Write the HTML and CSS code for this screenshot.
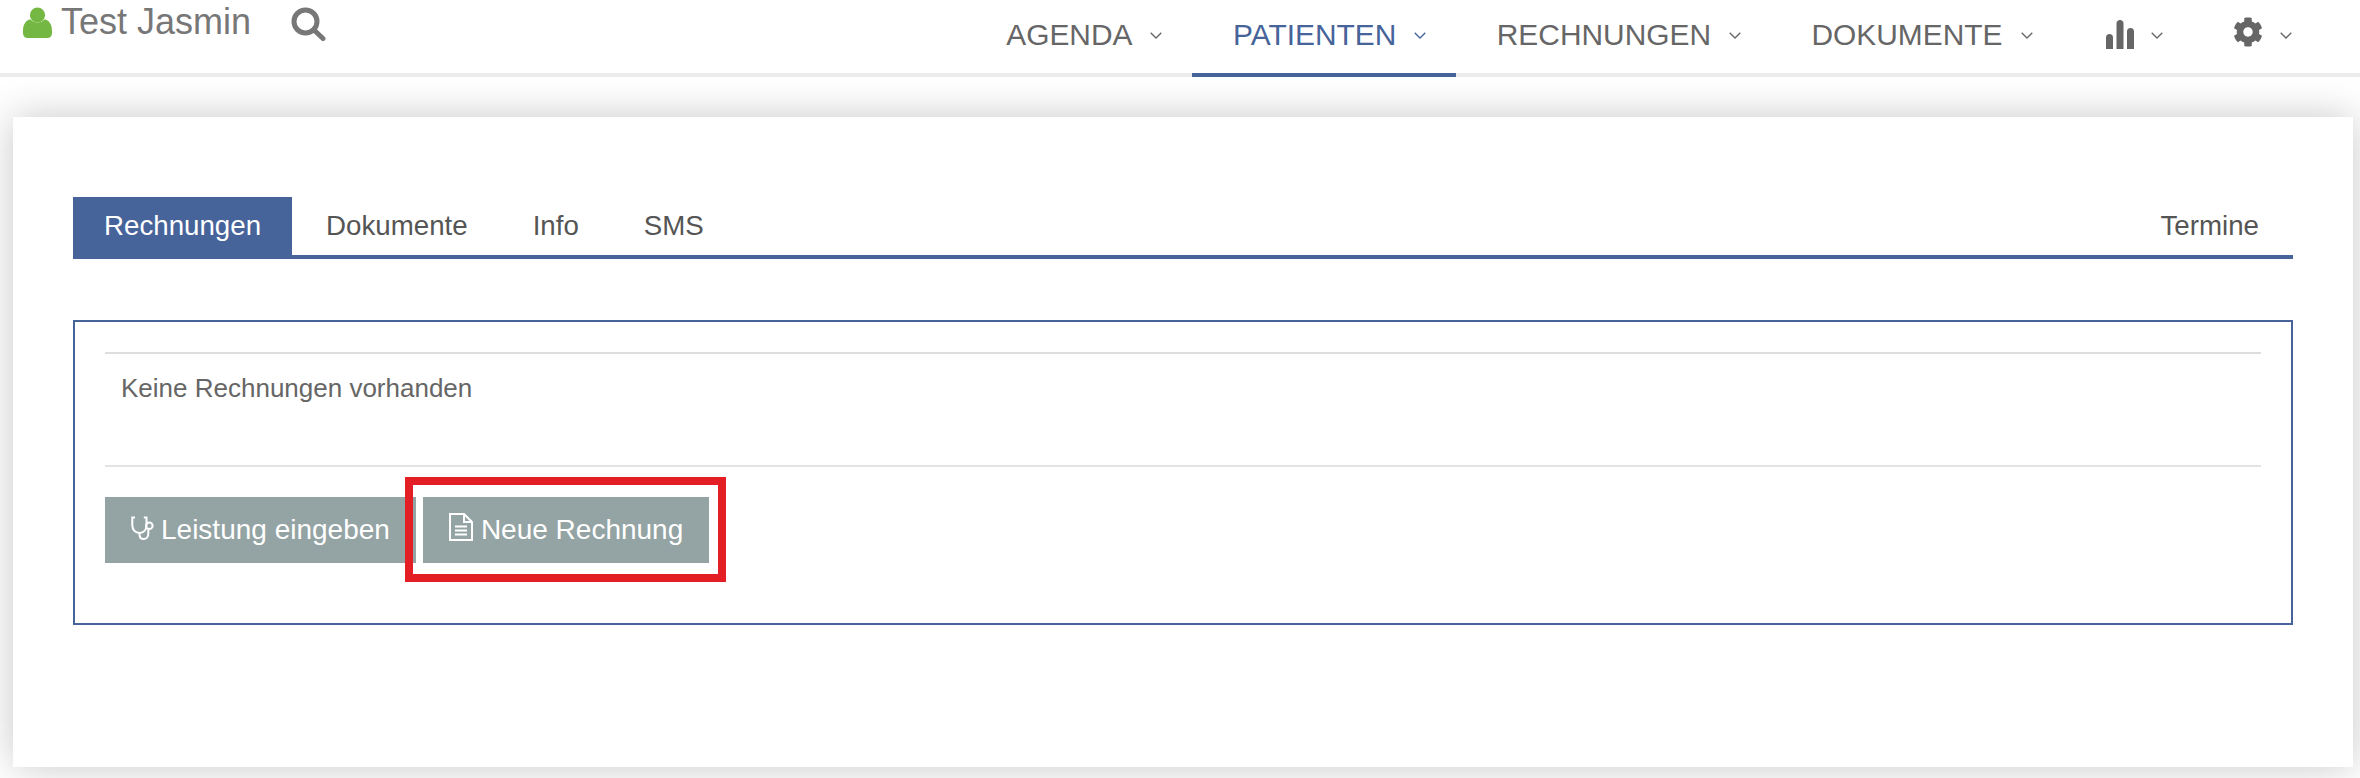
FILE: index.html
```html
<!DOCTYPE html>
<html lang="de">
<head>
<meta charset="utf-8">
<title>Patienten</title>
<link rel="stylesheet" href="styles.css">
</head>
<body>
<header class="topbar">
  <div class="user">
    <svg class="user-icon" viewBox="0 0 29 31"><circle cx="14.5" cy="8" r="7.6"/><path d="M0 23.5C0 17.5 3 13 7.5 12.2 9.300 14.300 11.700 15.500 14.500 15.500S19.700 14.300 21.500 12.200C26 13 29 17.500 29 23.500V26.500C29 29 27 31 24.500 31H4.500C2 31 0 29 0 26.500Z"/></svg>
    <span class="user-name">Test Jasmin</span>
    <svg class="search-icon" viewBox="0 0 35 34"><circle cx="14.500" cy="14.500" r="11.500"/><path d="M23 23L32 31.500"/></svg>
  </div>
  <nav class="nav">
    <a class="nav-item"><span>AGENDA</span><svg class="chev" viewBox="0 0 12 7"><path d="M.7.7 6 6 11.300.7"/></svg></a>
    <a class="nav-item active"><span>PATIENTEN</span><svg class="chev" viewBox="0 0 12 7"><path d="M.7.7 6 6 11.300.7"/></svg></a>
    <a class="nav-item"><span>RECHNUNGEN</span><svg class="chev" viewBox="0 0 12 7"><path d="M.7.7 6 6 11.300.7"/></svg></a>
    <a class="nav-item"><span>DOKUMENTE</span><svg class="chev" viewBox="0 0 12 7"><path d="M.7.7 6 6 11.300.7"/></svg></a>
    <a class="nav-item icon-item"><svg class="chart-icon" viewBox="0 0 28 29"><path d="M0 29V17.500C0 15.500 1.300 14 3.500 14S7 15.500 7 17.500V29ZM10.500 29V3.500C10.500 1.500 12 0 14 0S17.500 1.500 17.500 3.500V29ZM21 29V11.500C21 9.500 22.300 8 24.500 8S28 9.500 28 11.500V29Z"/></svg><svg class="chev" viewBox="0 0 12 7"><path d="M.7.7 6 6 11.300.7"/></svg></a>
    <a class="nav-item icon-item"><svg class="gear-icon" viewBox="0 0 512 512"><path d="M487.400 315.700l-42.600-24.600c4.300-23.200 4.300-47 0-70.200l42.600-24.600c4.900-2.800 7.100-8.600 5.500-14-11.100-35.600-30-67.800-54.700-94.600-3.800-4.100-10-5.100-14.800-2.300L380.800 110c-17.900-15.400-38.500-27.300-60.800-35.100V25.800c0-5.600-3.900-10.500-9.400-11.700-36.700-8.200-74.300-7.800-109.200 0-5.500 1.200-9.400 6.100-9.400 11.700V75c-22.200 7.900-42.800 19.800-60.800 35.100L88.700 85.500c-4.900-2.800-11-1.900-14.800 2.300-24.700 26.700-43.600 58.900-54.700 94.600-1.700 5.400.6 11.200 5.500 14L67.300 221c-4.300 23.200-4.300 47 0 70.200l-42.600 24.600c-4.900 2.800-7.100 8.600-5.500 14 11.100 35.600 30 67.800 54.700 94.600 3.800 4.100 10 5.100 14.800 2.300l42.600-24.600c17.900 15.400 38.500 27.300 60.800 35.100v49.200c0 5.600 3.900 10.500 9.400 11.700 36.700 8.200 74.300 7.800 109.200 0 5.500-1.200 9.400-6.100 9.400-11.700v-49.200c22.200-7.900 42.800-19.800 60.800-35.100l42.600 24.600c4.900 2.800 11 1.900 14.800-2.300 24.700-26.700 43.600-58.900 54.700-94.600 1.500-5.500-.7-11.300-5.600-14.100zM256 336c-44.100 0-80-35.900-80-80s35.900-80 80-80 80 35.900 80 80-35.900 80-80 80z"/></svg><svg class="chev" viewBox="0 0 12 7"><path d="M.7.7 6 6 11.300.7"/></svg></a>
  </nav>
</header>
<main class="card">
  <div class="tabs">
    <a class="tab active">Rechnungen</a>
    <a class="tab">Dokumente</a>
    <a class="tab">Info</a>
    <a class="tab">SMS</a>
    <a class="tab tab-right">Termine</a>
  </div>
  <section class="panel">
    <div class="message">Keine Rechnungen vorhanden</div>
    <div class="actions">
      <a class="btn btn-first"><svg class="steth-icon" viewBox="0 0 24 24"><path d="M5 1.500H2.300V9C2.300 14 5.500 17 9.500 17S16.500 14 16.500 9V1.500H13.800"/><path d="M9.500 17V18.500C9.500 21.500 11.500 23 13.800 23S18.300 21 18.300 18V13.500"/><circle cx="19.300" cy="9.800" r="3.300"/></svg>Leistung eingeben</a>
      <a class="btn btn-marked"><svg class="doc-icon" viewBox="0 0 24 28"><path d="M1 1H15L23 9V27H1Z"/><path d="M15 1V9H23"/><path class="doc-lines" d="M6 13.500H18M6 17.500H18M6 21.500H18"/></svg>Neue Rechnung<span class="marker"></span></a>
    </div>
  </section>
</main>
</body>
</html>
```
FILE: styles.css
```css
* { box-sizing: border-box; }
html, body { margin: 0; height: 778px; overflow: hidden; background: #fff; }
body { font-family: "Liberation Sans", Arial, sans-serif; color: #666; }

.topbar {
  position: relative;
  display: flex;
  justify-content: space-between;
  height: 77px;
  border-bottom: 4px solid #ececec;
  background: #fff;
}
.user { display: flex; align-items: flex-start; padding-left: 23px; }
.user-icon { width: 29px; height: 31px; margin-top: 7px; fill: #74b843; }
.user-name { margin-left: 9px; font-size: 36px; line-height: 44px; color: #777; }
.search-icon { width: 35px; height: 34px; margin: 7px 0 0 40px; fill: none; stroke: #777; stroke-width: 5; stroke-linecap: round; }

.nav { display: flex; margin-right: 38px; }
.nav-item {
  display: flex;
  align-items: center;
  gap: 18px;
  height: 77px;
  padding: 0 30px 4px 40.5px;
  border-bottom: 4px solid transparent;
  font-size: 29.9px;
  color: #666;
}
.nav-item.active { border-bottom-color: #46639a; color: #46639a; }
.nav-item .chev { width: 12px; height: 7px; margin-top: 2px; fill: none; stroke: currentColor; stroke-width: 1.300; }
.icon-item { gap: 17px; padding-left: 43px; }
.icon-item:last-child { padding-left: 40.5px; }
.chart-icon { width: 28px; height: 29px; fill: #666; }
.gear-icon { width: 30px; height: 30px; fill: #666; margin-top: -5px; }

.card {
  height: 650px;
  margin: 40px 7px 11px 13px;
  padding: 80px 60px 0;
  background: #fff;
  box-shadow: 0 0 38px rgba(0, 0, 0, .22);
}
.tabs { display: flex; height: 62px; border-bottom: 4px solid #46639a; }
.tab {
  padding: 0 31px;
  margin-right: 3px;
  font-size: 27.7px;
  line-height: 58px;
  color: #555;
}
.tab.active { background: #46639a; color: #fff; }
.tab-right { margin: 0 0 0 auto; padding-right: 34px; }

.panel {
  display: flex;
  flex-direction: column;
  height: 305px;
  margin-top: 61px;
  padding: 30px 30px 0;
  border: 2px solid #46639a;
}
.message {
  height: 115px;
  padding: 18px 16px 0;
  border-top: 2px solid #ddd;
  border-bottom: 2px solid #e4e4e4;
  font-size: 26px;
  line-height: 32px;
  color: #666;
}
.actions { display: flex; gap: 7px; margin-top: 30px; }
.btn {
  position: relative;
  display: flex;
  align-items: center;
  height: 66px;
  padding: 0 26px 0 25px;
  background: #94a3a3;
  color: #fff;
  font-size: 28px;
}
.btn-marked { padding: 0 26px; }
.steth-icon { width: 24px; height: 24px; margin: -4px 7px 0 0; fill: none; stroke: #fff; stroke-width: 2; }
.doc-icon { width: 24px; height: 28px; margin: -6px 8px 0 0; fill: none; stroke: #fff; stroke-width: 2; }
.doc-icon .doc-lines { stroke-width: 1.800; }
.marker {
  position: absolute;
  top: -20px;
  right: -17px;
  bottom: -19px;
  left: -18px;
  border: 8px solid #e31e24;
}
```
